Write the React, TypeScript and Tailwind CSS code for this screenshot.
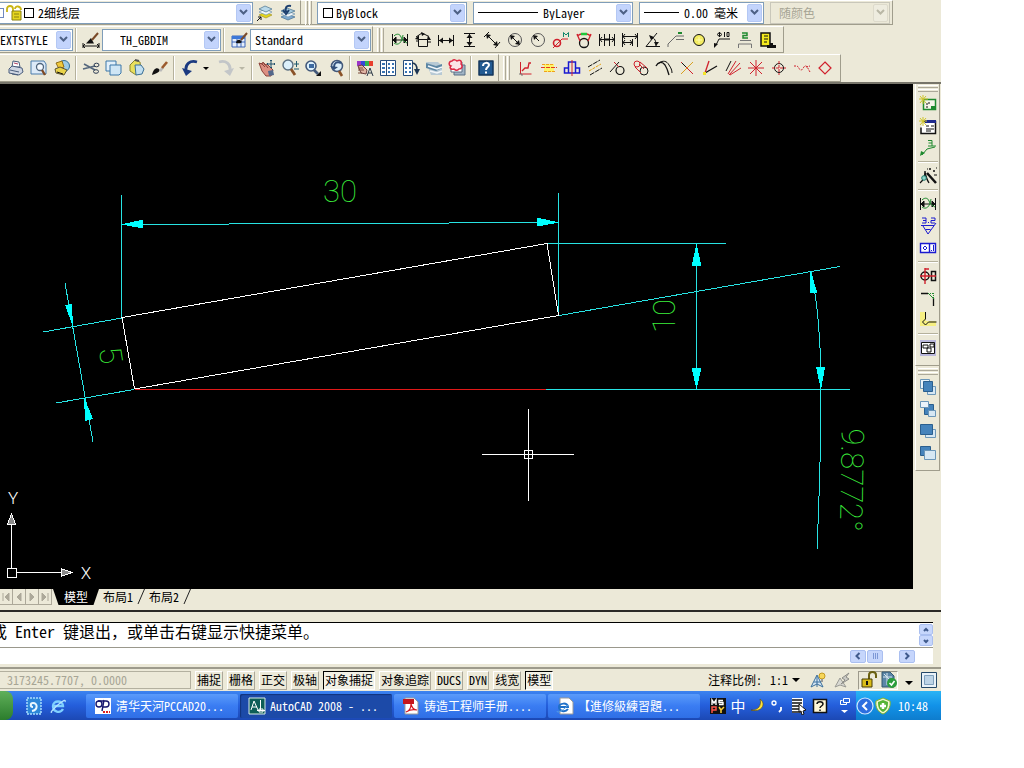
import React from 'react';

type Art = React.ReactNode;

const K = '#111111';
const R = '#d0202c';
const G = '#1f8a2f';
const B = '#1a1ad0';

const art: Record<string, Art> = {
  layerStates: (
    <>
      <path d="M3 11l6-3 7 3-6 3z" fill="#e3d51c" stroke="#9a8c1c" strokeWidth=".6" />
      <path d="M3 8l6-3 7 3-6 3z" fill="#eef6fb" stroke="#6f93ad" strokeWidth=".7" />
      <path d="M3 5l6-3 7 3-6 3z" fill="#b9d9ea" stroke="#47708c" strokeWidth=".7" />
      <path d="M1 17l4-4M2 13h3v3" stroke={K} />
    </>
  ),
  layerPrev: (
    <>
      <path d="M2 13l6-3 8 3-7 3z" fill="#7eaad0" stroke="#456e92" strokeWidth=".7" />
      <path d="M2 10l6-3 8 3-7 3z" fill="#f2f7fb" stroke="#6f93ad" strokeWidth=".7" />
      <path d="M2 7l6-3 8 3-7 3z" fill="#a5cbe0" stroke="#47708c" strokeWidth=".7" />
      <path d="M12 2C7 1 6 4 7 8M4 6l3 4 3-4" stroke="#1d3f6e" strokeWidth="2" />
    </>
  ),
  dimStyle: (
    <>
      <path d="M1 15h16M1 12v5M17 12v5M3 13l-2 2 2 2M15 13l2 2-2 2" stroke={K} />
      <path d="M4 12.500h8L9 7z" fill={K} />
      <path d="M10 9l6-7" stroke="#7a4a28" strokeWidth="2" />
    </>
  ),
  tableStyle: (
    <>
      <path d="M2 5h13v11H2z" fill="#e4eefc" stroke="#3d67b8" />
      <path d="M2 5h13v3H2z" fill="#3d78d8" />
      <path d="M2 11h13M7 8v8M11 8v8" stroke="#3d67b8" />
      <path d="M6 12c0-3 3-4 4-3l2 2c-2 2-4 1-6 1z" fill={K} />
      <path d="M11 9l6-7" stroke="#7a4a28" strokeWidth="2" />
    </>
  ),
  print: (
    <>
      <path d="M5 8l1-6 6 1 1 5z" fill="#fff" stroke="#4a5d7c" />
      <path d="M2 10l3-3 10 2 1 4-4 3-10-2z" fill="#cfd6e2" stroke="#4a5d7c" />
      <path d="M3 11l9 2M5 15l6 1" stroke="#4a5d7c" />
      <path d="M7 4l4 1" stroke="#b04060" />
    </>
  ),
  preview: (
    <>
      <path d="M1 2h13l2 3v10H1z" fill="#dceaf8" stroke="#4b7cab" />
      <circle cx="10" cy="8" r="3.5" fill="#f5faff" stroke="#50667d" strokeWidth="1.3" />
      <path d="M12 11l3 5" stroke="#7d4a25" strokeWidth="2.4" />
    </>
  ),
  publish: (
    <>
      <circle cx="11" cy="7" r="5.5" fill="#9ccbe6" stroke="#2f6d98" />
      <path d="M3 4l6-2 2 6-5 2z" fill="#f0c83a" stroke="#906f18" />
      <path d="M2 10l5-2 7 3-3 5-8-2z" fill="#e9d34a" stroke="#5b5230" />
      <path d="M4 13l6 2" stroke={K} />
    </>
  ),
  cut: (
    <>
      <path d="M2 5l11 6M1 10l12-3" stroke="#55677c" strokeWidth="1.6" />
      <ellipse cx="14" cy="12.5" rx="2.5" ry="1.8" stroke="#2c3b52" />
      <ellipse cx="14.500" cy="6" rx="2.5" ry="1.800" stroke="#2c3b52" />
    </>
  ),
  copy: (
    <>
      <path d="M1 2h10v10H1z" fill="#e2f0fa" stroke="#3a77a8" />
      <path d="M5 6h11v8l-2 2H5z" fill="#cfe6f5" stroke="#3a77a8" />
    </>
  ),
  paste: (
    <>
      <path d="M2 6l5-5 5 2 1 9-5 4-6-4z" fill="#e9df5c" stroke="#8a8430" />
      <path d="M7 1l4 1" stroke="#555" strokeWidth="2" />
      <path d="M7 6h6l3 4-2 5-6 1z" fill="#c2dff0" stroke="#3a6f96" />
    </>
  ),
  match: (
    <>
      <path d="M1 16c1-5 4-8 7-6 2 2-1 4-7 6z" fill={K} />
      <path d="M8 11l3-3 2 1-3 4z" fill="#b8b8b8" />
      <path d="M11 9l5-6" stroke="#9b5b2e" strokeWidth="2.6" />
    </>
  ),
  undo: (
    <>
      <path d="M16 3C9 1 4 5 5 12" stroke="#1b3a80" strokeWidth="2.8" />
      <path d="M1 9l4 8 6-5z" fill="#1b3a80" />
    </>
  ),
  redo: (
    <>
      <path d="M2 3c7-2 12 2 11 9" stroke="#c3c6c8" strokeWidth="2.8" />
      <path d="M17 9l-4 8-6-5z" fill="#c3c6c8" />
    </>
  ),
  pan: (
    <>
      <path d="M1 4l3 1 1-2 2 3 2-1 6 6-2 6H8L4 12z" fill="#dc8f82" stroke="#8a4038" />
      <path d="M3 4l4 4M6 4l4 5" stroke="#8a4038" />
      <path d="M10 12l5-1 1 5-5 1z" fill="#53688b" />
      <path d="M13 1v8M9 5h8M12 2l1-1 1 1M12 8l1 1 1-1M10 4l-1 1 1 1M16 4l1 1-1 1" stroke="#21506d" />
    </>
  ),
  zoomRt: (
    <>
      <circle cx="7" cy="6" r="5" fill="#dcf0fb" stroke="#5b6f80" strokeWidth="1.4" />
      <path d="M10 10l4 6" stroke="#8a5228" strokeWidth="2.8" />
      <path d="M13 5h5M15.500 2v6M13 10h5" stroke="#215a6f" />
    </>
  ),
  zoomWin: (
    <>
      <circle cx="7" cy="7" r="5" fill="#dcf0fb" stroke="#43597a" strokeWidth="1.6" />
      <path d="M5 5h5v4H5z" fill="#3d6aa0" />
      <path d="M10 11l4 4" stroke="#43597a" strokeWidth="2.6" />
      <path d="M17 12v5h-5z" fill={K} />
    </>
  ),
  zoomPrev: (
    <>
      <circle cx="10" cy="7" r="5.500" fill="#dcf0fb" stroke="#43597a" strokeWidth="1.5" />
      <path d="M14 4c-4-2-7 0-7 4" stroke="#30507c" strokeWidth="2" />
      <path d="M3 7l4 4 4-3z" fill="#30507c" />
      <path d="M12 12l3 5" stroke="#8a5228" strokeWidth="2.6" />
    </>
  ),
  props: (
    <>
      <path d="M1 2h4v5H1z" fill="#9b35c8" />
      <path d="M5 2h4v5H5z" fill="#3548d8" />
      <path d="M9 2h4v5H9z" fill="#30b34e" />
      <path d="M13 2h4v5h-4z" fill="#e8402e" />
      <path d="M2 7l4-1 5 5-1 4-5-1z" fill="#e0b5a4" stroke="#6b3c3c" />
      <path d="M2 9h5M2 11h6M2 14h4" stroke="#7a4a3a" />
      <path d="M11 17l3-8 3 8M12 14h4" stroke="#2d3a48" />
    </>
  ),
  designCenter: (
    <>
      <path d="M1.500 1.500h15v15h-15z" fill="#fff" stroke="#284d7c" />
      <path d="M7.500 2v14" stroke="#284d7c" />
      <path d="M3 4h3v2H3zM3 8h3v2H3zM3 12h3v2H3zM9 4h2v2H9zM13 4h2v2h-2zM9 8h2v2H9zM13 8h2v2h-2zM9 12h2v2H9zM13 12h2v2h-2z" fill="#3974b4" />
    </>
  ),
  toolPalette: (
    <>
      <path d="M1.500 1.500h9v15h-9z" fill="#fff" stroke="#284d7c" />
      <path d="M3 4h2v2H3zM7 4h2v2H7zM3 8h2v2H3zM7 8h2v2H7zM3 12h2v2H3zM7 12h2v2H7z" fill="#3974b4" />
      <path d="M10 4c4 0 5 3 5 7" stroke="#1d3552" strokeWidth="1.600" />
      <path d="M12 10l3 6 3-6z" fill="#1d3552" />
    </>
  ),
  sheetSet: (
    <>
      <path d="M1 3h12l4 4v9H6z" fill="#b7c9d4" />
      <path d="M1 4l10 3 6-2v4l-6 3-10-3z" fill="#5d87a4" />
      <path d="M3 7l9 3 5-2M5 12l7 2 5-2" stroke="#f3f7fa" strokeWidth="1.5" />
    </>
  ),
  markup: (
    <>
      <path d="M6 6h11v10H6z" fill="#9fb3c4" stroke="#5a7186" />
      <path d="M3 3h11v10H3z" fill="#fff" stroke="#5a7186" />
      <path d="M4 2c2-2 4-1 5 0 3-2 5 0 4 3 2 2 1 5-2 5-2 2-4 1-5 0-3 1-5-1-3-3-3-1-2-5 1-5z" fill="#fbe3e6" stroke="#dd2744" strokeWidth="1.5" />
    </>
  ),
  help: (
    <>
      <path d="M2 2h14v14H2z" fill="#235b92" stroke="#14365a" strokeWidth="1.5" strokeLinejoin="round" />
      <path d="M6 7c0-4 6-4 6-1 0 2-3 2-3 5M9 12.500v2" stroke="#fff" strokeWidth="2" />
    </>
  ),
  dPower: (
    <>
      <path d="M1.500 3v12M16.500 3v12M2 9h14M2 9l3-3v6zM16 9l-3-3v6z" fill={K} stroke={K} />
      <path d="M3 5c3-3 6-2 7 1s4 5 6 6M3 12c4 3 8 0 9-8" stroke={G} />
    </>
  ),
  dMulti: (
    <>
      <path d="M4.500 8.500h9v7h-9zM2 6l6-4 6 3M2 10h2M14 11h3" stroke={K} />
      <path d="M1 8l4-4v5zM7 1l4 2-3 2zM14 4l3 5h-4z" fill={K} />
    </>
  ),
  dLinear: (
    <>
      <path d="M1.500 4v11M16.500 4v11M2 9.500h14" stroke={K} />
      <path d="M2 9.500l4-3v6zM16 9.500l-4-3v6z" fill={K} />
    </>
  ),
  dVert: (
    <>
      <path d="M4 2.500h11M4 15.500h11M9.500 3v12" stroke={K} />
      <path d="M9.500 3l3 4h-6zM9.500 15l3-4h-6z" fill={K} />
    </>
  ),
  dAligned: (
    <>
      <path d="M6 1L1 6M17 11l-5 6M4 4l10 10" stroke={K} />
      <path d="M3 3l5 1-4 4zM15 15l-5-1 4-4z" fill={K} />
    </>
  ),
  dDia: (
    <>
      <circle cx="9" cy="9" r="6.500" stroke="#555" />
      <path d="M5 5l8 8" stroke={K} />
      <path d="M4 4l5 1-4 4zM14 14l-5-1 4-4z" fill={K} />
    </>
  ),
  dRad: (
    <>
      <circle cx="9" cy="9" r="6.500" stroke="#555" />
      <path d="M5 5l5 5" stroke={K} />
      <path d="M4 4l5 1-4 4z" fill={K} />
    </>
  ),
  dTolM: (
    <>
      <circle cx="5" cy="12" r="3.500" stroke={R} strokeWidth="1.600" />
      <path d="M1 17L10 8h6" stroke={R} />
      <path d="M11.500 6V1.500l2.500 2.500 2.500-2.500V6" stroke="#12876c" />
    </>
  ),
  dArcLen: (
    <>
      <circle cx="9" cy="12" r="4.500" stroke={K} strokeWidth="1.300" />
      <path d="M2 3l3 7M16 3l-3 7M2 5c4-3 10-3 14 0" stroke={R} strokeWidth="1.300" />
      <path d="M6 3h6" stroke="#1fc63b" strokeWidth="2.500" />
    </>
  ),
  dCont: <path d="M1.500 3v12M6.500 3v12M11.500 3v12M16.500 3v12M2 8.500h14M4 6L2 8.500 4 11M14 6l2 2.500-2 2.500M8 7v3M10 7v3" stroke={K} />,
  dBase: <path d="M1.500 2v14M16.500 2v14M11.500 8v7M2 5.500h14M2 11.500h9M4 3L2 5.500 4 8M14 3l2 2.500L14 8M4 9l-2 2.500L4 14M9 9l2 2.500L9 14" stroke={K} />,
  dAng: (
    <>
      <path d="M13 2L2 15.500h14M7 6c4 1 5 4 5 9" stroke={K} />
      <path d="M5 4l5 2-3 3zM10 11h5l-3 4z" fill={K} />
    </>
  ),
  dLeader: (
    <>
      <path d="M1 16v-3l8-8h8M9 8.500h8" stroke="#6b6b6b" />
      <path d="M11 1h4v2h-4z" fill={G} />
    </>
  ),
  dCenter: (
    <>
      <circle cx="9" cy="9" r="5.500" fill="#f3ec62" stroke={K} />
      <path d="M9 6v6M6 9h6" stroke="#fffbb0" />
    </>
  ),
  dHole: (
    <>
      <path d="M3 14l3-6h11" stroke={K} />
      <path d="M1 12l4 1-4 4z" fill={K} />
      <ellipse cx="6.500" cy="3.500" rx="2" ry="1.500" stroke={K} />
      <path d="M6.500 1v5M11.500 1v5M14 1.500h2v4h-2z" stroke={K} />
    </>
  ),
  dNumber: (
    <>
      <path d="M6 2h5v2.500H7V7h5" stroke={G} strokeWidth="1.500" />
      <path d="M4 9.500h11M2.500 17v-4h13v4" stroke="#777" />
    </>
  ),
  dTable: (
    <>
      <path d="M2 2h9v13H2z" fill="#f4ea1e" stroke={K} strokeWidth="1.500" />
      <path d="M5 5h4M5 8h4M5 11h3" stroke={K} />
      <path d="M8 17v-3h3v-2h3v2h3v3z" fill={K} />
    </>
  ),
  cAxes: (
    <>
      <path d="M3.500 3v12h11" stroke={R} />
      <path d="M5 12l3-3h3l1-5h2" stroke={R} strokeWidth="1.300" />
      <path d="M2 15h3v2" stroke="#777" />
    </>
  ),
  cYellow: (
    <>
      <path d="M4 5h10v8H4z" fill="#fdf46a" />
      <path d="M1 8.500h16" stroke="#e23a20" strokeDasharray="4 1" />
      <path d="M2 5.500h12M4 12.500h11" stroke="#f0a01a" strokeDasharray="3 1" />
    </>
  ),
  cBlue: (
    <>
      <path d="M5.500 9V3h7v6h4v5h-15V9h4v5M12.500 9v5" stroke={B} strokeWidth="1.500" />
      <path d="M9 1v16" stroke={R} />
    </>
  ),
  cMid: (
    <>
      <path d="M2 8L14 1M4 16l12-7" stroke={K} strokeDasharray="5 1" />
      <path d="M3 12L15 5" stroke="#e6a212" strokeDasharray="3 1" />
    </>
  ),
  cTan: (
    <>
      <circle cx="11" cy="11.500" r="4" stroke={K} strokeWidth="1.200" />
      <path d="M5 3l5 5" stroke={R} />
      <path d="M1 13L10 3" stroke={K} />
    </>
  ),
  cBelt: (
    <>
      <circle cx="5" cy="5" r="3" stroke={R} />
      <circle cx="12" cy="12" r="4" stroke={K} />
      <path d="M3 8l6 6M8 3l7 6M7 5l5 5" stroke={R} />
    </>
  ),
  cArcOff: (
    <>
      <path d="M1 7c2-4 6-5 9-1 2 3 3 6 4 10" stroke={K} strokeWidth="1.300" />
      <path d="M4 4c4-3 8-2 10 2 2 3 3 5 3 8" stroke={K} />
    </>
  ),
  cCross: (
    <>
      <path d="M3 3l12 12" stroke={R} />
      <path d="M15 3L3 15" stroke="#d8a020" />
      <path d="M4 4l4 4" stroke={K} />
    </>
  ),
  cAngle: (
    <>
      <path d="M8 2L4 14" stroke={R} strokeWidth="1.300" />
      <path d="M4 14l12-7" stroke={K} strokeWidth="1.300" />
      <path d="M2 13h3v3H2z" fill="#f3e52c" />
    </>
  ),
  cFan: (
    <>
      <path d="M7 2L2 12" stroke={K} />
      <path d="M12 2L4 15M16 4L5 16M17 9L6 16" stroke={R} />
    </>
  ),
  cStar: <path d="M9 1v16M1 9h16M3 3l12 12M15 3L3 15" stroke={R} />,
  cTarget: (
    <>
      <circle cx="9" cy="9" r="4.500" stroke={K} />
      <path d="M9 2v14M2 9h14" stroke={R} strokeDasharray="3 1" />
    </>
  ),
  cWave: (
    <path d="M1 7h3c2 1 2 4 4 4s2-3 4-4 3 3 5 6M13 8l4-1" stroke={R} strokeDasharray="2 1" />
  ),
  cDiamond: <path d="M9 3l6 6-6 6-6-6z" stroke={R} strokeWidth="1.200" />,
  sFrame: (
    <>
      <path d="M4.500 4.500h12v10h-12z" fill="#f6f4e8" stroke={G} strokeWidth="1.500" />
      <path d="M4 0v9M0 4h9M1 1l6 7M7 1L1 8" stroke="#cfc52a" />
      <path d="M8 13V8h4" stroke={K} strokeDasharray="2 1" />
      <path d="M12 11h5v4h-5z" fill={G} />
    </>
  ),
  sSheet: (
    <>
      <path d="M4.500 4.500h12v12H2v-6" fill="#fff" stroke={K} strokeWidth="1.500" />
      <path d="M6 3h11v3H6z" fill="#1e2a8e" />
      <path d="M7 9h3M12 9h3M7 12h8M7 14h5" stroke={K} />
      <path d="M4 0v9M0 4h8M1 1l6 7M7 1L1 8" stroke="#cfc52a" />
    </>
  ),
  sLeader: (
    <>
      <path d="M9 1.500h4V7M13 4H9.500M9 7h8" stroke={G} />
      <path d="M3 16l5-6 8-2" stroke={G} />
      <path d="M1 17l1-5 4 2z" fill={G} />
    </>
  ),
  sWand: (
    <>
      <path d="M8 6l9 10" stroke={K} strokeWidth="2.500" />
      <path d="M6 4c0 5-1 9-5 12M6 5c1 5 2 8 4 11" stroke={K} strokeWidth="1.300" />
      <circle cx="5" cy="11" r="2.300" fill="#8fd6ca" stroke="#1f7a6c" />
      <path d="M10 2h2M11 1v2M14 4h2M15 3v2M15 8h3M8 2h1M17 1h1" stroke={K} />
    </>
  ),
  sRough: (
    <>
      <path d="M3 1h4v5H3M4 3.500h3M9 5.500h1M12 1h4v2.500h-4V6h4" stroke={B} />
      <path d="M2 8.500h13M4 9l5 8 8-11M6.500 12.500h5" stroke={B} />
    </>
  ),
  sGdt: (
    <>
      <path d="M1.500 4.500h15v9h-15zM10.500 5v8" fill="#fff" stroke={B} strokeWidth="1.400" />
      <path d="M6 7l2 2-2 2-2-2zM12 11.500h1M14.500 6v6" stroke={B} />
    </>
  ),
  sShaft: (
    <>
      <circle cx="6" cy="9" r="4" stroke={K} strokeWidth="1.500" />
      <path d="M12.500 4.500h4v9h-4z" stroke={K} strokeWidth="1.500" />
      <path d="M6 1v16M1 9h16M6 2h4" stroke={R} strokeWidth="1.400" />
    </>
  ),
  sChamfer: (
    <>
      <path d="M2 4.500h7M14.500 9v8" stroke={K} strokeWidth="1.300" />
      <path d="M9 4l6 6" stroke={G} />
      <path d="M9 4.500h6M14.500 4v6" stroke={G} strokeDasharray="1 1" />
    </>
  ),
  sCorner: (
    <>
      <path d="M1 1h6v9h10v5H1z" fill="#f6ef82" />
      <path d="M6.500 1v7l-3 3 3 3 3-3h8" stroke={K} />
    </>
  ),
  sDetail: (
    <>
      <path d="M1 1h16v16H1z" fill="#b9b7dc" />
      <path d="M2.500 3.500h13v11h-13z" fill="#fff" stroke={K} />
      <path d="M4 6h5v3H4zM8 9h4v4H8zM11 5h4v3h-4z" stroke={K} />
    </>
  ),
  oFront: (
    <>
      <path d="M1.500 1.500h9v9h-9z" fill="#eaf3fa" stroke="#6b96b8" />
      <path d="M8.500 8.500h8v8h-8z" fill="#d6e7f3" stroke="#6b96b8" />
      <path d="M4.500 3.500h9v10h-9z" fill="#4583bb" stroke="#2b5f8e" />
    </>
  ),
  oBack: (
    <>
      <path d="M5.500 4.500h9v10h-9z" fill="#4583bb" stroke="#2b5f8e" />
      <path d="M1.500 1.500h8v6h-8z" fill="#eaf3fa" stroke="#6b96b8" />
      <path d="M9.500 10.500h7v6h-7z" fill="#d6e7f3" stroke="#6b96b8" />
    </>
  ),
  oAbove: (
    <>
      <path d="M6.500 7.500h10v8h-10z" fill="#d6e7f3" stroke="#6b96b8" />
      <path d="M1.500 2.500h12v10h-12z" fill="#4583bb" stroke="#2b5f8e" />
    </>
  ),
  oUnder: (
    <>
      <path d="M1.500 2.500h10v9h-10z" fill="#4583bb" stroke="#2b5f8e" />
      <path d="M5.500 6.500h11v9h-11z" fill="#d6e7f3" stroke="#6b96b8" />
    </>
  ),
  annoVis: (
    <>
      <path d="M8 4L2 16l6-3 6 3z" fill="#d5e6f4" stroke="#3a6f9c" />
      <path d="M8 5v11M5 11h7" stroke="#3a6f9c" />
      <circle cx="13" cy="5" r="3" fill="#f6d65a" stroke="#c49a20" />
      <path d="M12 8h2v3h-2z" fill="#999" />
    </>
  ),
  annoAuto: (
    <>
      <path d="M7 7L2 16l5-2 6 2z" fill="#d9d9d3" stroke="#9a9a94" />
      <path d="M16 2l-7 5 3 2-4 4 8-5-3-2z" fill="#c9c9c4" stroke="#8d8d88" />
    </>
  ),
  lock: (
    <>
      <path d="M9 8V4c0-4 7-4 7 0v3" stroke="#6a6010" strokeWidth="2" />
      <path d="M2 8h10v8H2z" fill="#d9bc17" stroke="#463d08" />
      <path d="M7 10v4" stroke={K} strokeWidth="2" />
    </>
  ),
  docOk: (
    <>
      <path d="M2 1h8l4 4v11H2z" fill="#5b86a8" stroke="#33566f" />
      <path d="M3 6h9M7 2v12M4 3l7 7" stroke="#d7e6f0" />
      <circle cx="12" cy="12" r="5" fill="#2b9d3c" />
      <path d="M9.500 12l2 2 3-4" stroke="#fff" strokeWidth="1.600" />
    </>
  ),
  clean: (
    <>
      <path d="M1.500 1.500h15v15h-15z" fill="#e8f1f8" stroke="#234768" />
      <path d="M4.500 4.500h9v9h-9z" fill="#bcd3e6" stroke="#7fa0bd" />
    </>
  ),
  messenger: (
    <>
      <path d="M2 1h14v16H2z" fill="#2d87d8" stroke="#a9dcff" strokeDasharray="2 1" strokeWidth="1.500" />
      <path d="M7 14c6-1 6-8 1-8-3 0-3 4 0 4" stroke="#e9f7ff" strokeWidth="2" />
    </>
  ),
  ie: (
    <>
      <path d="M14 12c-3 5-10 3-10-3s10-6 10 0H5" stroke="#7fd0ff" strokeWidth="2.400" />
      <path d="M3 15C0 17 5 11 10 7s7-5 6-2" stroke="#b7e4ff" strokeWidth="1.200" />
    </>
  ),
  pccad: (
    <>
      <path d="M1 1h16v16H1z" fill="#fff" />
      <ellipse cx="5" cy="7" rx="3" ry="3" stroke="#16166e" strokeWidth="1.400" />
      <path d="M4 4h8c4 0 4 6 0 6H8M10 3L8 14" stroke="#16166e" strokeWidth="1.400" />
      <path d="M9 15h2M12 15h2M15 15h1" stroke="#e02020" strokeWidth="2" />
    </>
  ),
  acad: (
    <>
      <path d="M1 1h16v16H1z" fill="#0e5e57" stroke="#d9ece8" />
      <path d="M3 13l3-9 4 9M4 10h5M12.500 3v10M9 13.500h8M11 12h4v3h-4z" stroke="#fff" />
    </>
  ),
  pdf: (
    <>
      <path d="M3 1h9l4 4v12H3z" fill="#fff" stroke="#9a9a9a" />
      <path d="M1 2h11v5H1z" fill="#c5161d" />
      <path d="M9 7c0 4-2 7-5 8M9 7c1 4 3 6 6 6-4-1-8 0-11 2" stroke="#d6141c" strokeWidth="1.200" />
    </>
  ),
  iedoc: (
    <>
      <path d="M4 1h9l4 4v12H4z" fill="#fff" stroke="#9a9a9a" />
      <path d="M12 12c-3 4-9 2-9-2s9-5 9 0H4" stroke="#1e6fc8" strokeWidth="2" />
      <path d="M1 14c0 3 7-1 11-6" stroke="#57a2e6" />
    </>
  ),
  mspy: (
    <>
      <path d="M1 1h16v16H1z" fill="#111" />
      <path d="M3 8V3l2 3 2-3v5M14 3.500h-4v2h4v2h-4" stroke="#fff" strokeWidth="1.400" />
      <path d="M3 16v-6h4v3H3" stroke="#ff5348" strokeWidth="1.500" />
      <path d="M10 10l2 3 3-3M12 13v3" stroke="#ffd23c" strokeWidth="1.500" />
    </>
  ),
  moon: <path d="M11 2c7 5 1 14-9 11C9 14 13 8 11 2z" fill="#ffe23a" stroke="#5c4a08" strokeWidth=".6" />,
  punct: (
    <>
      <circle cx="5" cy="6" r="2" stroke="#fff" strokeWidth="1.300" />
      <path d="M12 10v3l-2 2" stroke="#fff" strokeWidth="1.800" />
    </>
  ),
  softkey: (
    <>
      <path d="M3 1h11v15H3z" fill="#fff" />
      <path d="M3 3h10M3 6h10M3 9h7M3 12h7M3 15h10" stroke={K} strokeWidth="1.400" />
      <path d="M10 7l7 6-3 1 1 3-2 1-1-4-2 1z" fill="#fff" stroke={K} />
    </>
  ),
  imeHelp: (
    <>
      <path d="M2.500 2.500h13v13h-13z" fill="#fff8d8" stroke={K} strokeWidth="1.500" />
      <path d="M6 7c0-3 6-3 6 0 0 2-3 2-3 4M9 12.500V14" stroke={K} strokeWidth="1.500" />
    </>
  ),
  restore: (
    <>
      <path d="M8.500 1.500h6v4h-6zM7.500 3.500h-2v4h6V6" stroke="#fff" />
      <path d="M6 13h7l-3.500 3z" fill="#fff" />
    </>
  ),
  collapse: (
    <>
      <circle cx="9" cy="9" r="8" fill="#2d6fe0" stroke="#cfe6ff" strokeWidth="1.200" />
      <path d="M11 5L7 9l4 4" stroke="#fff" strokeWidth="2" />
    </>
  ),
  shield: (
    <>
      <path d="M9 1l7 3c1 6-2 11-7 13C4 15 1 10 2 4z" fill="#f2f6d0" stroke="#7fb52e" />
      <path d="M9 3l5 2c0 5-1 8-5 10-4-2-5-5-5-10z" fill="#55b435" />
      <path d="M9 6v6M6 9h6" stroke="#fff" strokeWidth="2.500" />
    </>
  ),
  lockOpen: (
    <>
      <path d="M1 8V5c0-4 6-4 6 0v3M9 5c0-4 6-3 6 1" stroke="#c9b514" strokeWidth="1.800" />
      <path d="M6 7h9v9H6z" fill="#e6d61e" stroke="#8a8010" />
      <path d="M8 10h5M8 13h5" stroke="#8a8010" />
    </>
  ),
};

function Glyph({ name }: { name: string }) {
  return (
    <svg viewBox="0 0 18 18" fill="none" className="size-[18px] shrink-0" aria-hidden="true">
      {art[name]}
    </svg>
  );
}

function Tool({ name, cls = 'w-[23px] h-6' }: { name: string; cls?: string }) {
  return (
    <button type="button" aria-label={name} className={`flex shrink-0 items-center justify-center ${cls}`}>
      <Glyph name={name} />
    </button>
  );
}

function Caret({ tone = 'border-t-black' }: { tone?: string }) {
  return <span className={`h-0 w-0 border-x-[3px] border-t-[3px] border-x-transparent ${tone}`} />;
}

function Sep() {
  return <span className="mx-0.5 h-6 w-0.5 shrink-0 border-r border-l border-[#b5b19c] border-r-white" />;
}

function Grip() {
  return (
    <span className="mr-1 flex h-6 shrink-0 gap-px pl-1">
      <span className="w-[3px] border-r border-l border-l-white border-r-[#aca899]" />
      <span className="w-[3px] border-r border-l border-l-white border-r-[#aca899]" />
    </span>
  );
}

function Bar({ children, cls = '' }: { children: React.ReactNode; cls?: string }) {
  return (
    <div className={`flex shrink-0 items-center border-t border-r border-b border-t-white border-r-[#a09d8c] border-b-[#a09d8c] ${cls}`}>
      {children}
    </div>
  );
}

interface ComboProps {
  label: string;
  options: string[];
  cls: string;
  lead?: React.ReactNode;
  indent?: string;
  disabled?: boolean;
}

function Combo({ label, options, cls, lead, indent = 'pl-1', disabled = false }: ComboProps) {
  return (
    <div className={`flex h-[22px] shrink-0 items-center border ${disabled ? 'border-[#c9c7ba] bg-[#ece9d8] text-[#a7a595]' : 'border-[#7f9db9] bg-white'} ${cls}`}>
      {lead}
      <select aria-label={label} disabled={disabled} className={`h-full min-w-0 flex-1 appearance-none bg-transparent outline-none ${indent}`}>
        {options.map((o) => (
          <option key={o}>{o}</option>
        ))}
      </select>
      <span className={`mr-px flex h-[18px] w-[15px] items-center justify-center rounded-xs border ${disabled ? 'border-[#dddacb] bg-[#eeecdf] text-[#b9b7a6]' : 'border-[#b4c8f4] bg-[#c3d4fc] text-[#4d6185]'}`}>
        <svg viewBox="0 0 9 7" className="h-[7px] w-[9px]" fill="none" stroke="currentColor" strokeWidth="2">
          <path d="M1 1l3.500 3.500L8 1" />
        </svg>
      </span>
    </div>
  );
}

const dimTools = ['dPower', 'dMulti', 'dLinear', 'dVert', 'dAligned', 'dDia', 'dRad', 'dTolM', 'dArcLen', 'dCont', 'dBase', 'dAng', 'dLeader', 'dCenter', 'dHole', 'dNumber', 'dTable'];
const conTools = ['cAxes', 'cYellow', 'cBlue', 'cMid', 'cTan', 'cBelt', 'cArcOff', 'cCross', 'cAngle', 'cFan', 'cStar', 'cTarget', 'cWave', 'cDiamond'];
const sideGroups = [['sFrame', 'sSheet', 'sLeader'], ['sWand'], ['dPower', 'sRough', 'sGdt'], ['sShaft', 'sChamfer', 'sCorner'], ['sDetail']];
const orderTools = ['oFront', 'oBack', 'oAbove', 'oUnder'];

function Toolbars() {
  return (
    <header className="flex flex-col overflow-hidden border-b-2 border-[#77756a]">
      <div className="flex h-[26px] pb-px">
        <Bar cls="pr-px">
          <Combo
            label="图层"
            cls="w-[253px] border-l-0"
            indent="pl-1"
            options={['2细线层']}
            lead={
              <>
                <span className="h-2.5 w-1 border border-l-0 border-[#7089c0]" />
                <span className="ml-0.5 flex"><Glyph name="lockOpen" /></span>
                <span className="size-2.5 border border-black" />
              </>
            }
          />
          <Tool name="layerStates" />
          <Tool name="layerPrev" />
        </Bar>
        <Bar cls="pr-0.5">
          <Grip />
          <Combo label="颜色" cls="ml-px w-[150px]" indent="pl-[3px]" options={['ByBlock']} lead={<span className="ml-[5px] size-2.5 border border-black" />} />
          <Combo label="线型" cls="ml-1.5 w-40" indent="pl-[5px]" options={['ByLayer']} lead={<span className="ml-1 h-px w-[60px] bg-black" />} />
          <Combo label="线宽" cls="ml-1.5 w-[125px]" indent="pl-[5px]" options={['0.00 毫米']} lead={<span className="ml-1 h-px w-[35px] bg-black" />} />
          <Combo label="打印样式" cls="ml-1.5 w-[120px]" indent="pl-2" options={['随颜色']} disabled />
        </Bar>
      </div>
      <div className="flex h-7 pb-px">
        <Bar cls="pr-px">
          <Combo label="文字样式" cls="w-[73px] border-l-0" indent="pl-0" options={['EXTSTYLE']} />
          <Sep />
          <Tool name="dimStyle" />
          <Combo label="标注样式" cls="w-[119px]" indent="pl-[17px]" options={['TH_GBDIM']} />
          <Sep />
          <Tool name="tableStyle" />
          <Combo label="表格样式" cls="w-[121px]" options={['Standard']} />
        </Bar>
        <Bar cls="pr-1">
          <Grip />
          {dimTools.map((n) => <Tool key={n} name={n} />)}
        </Bar>
      </div>
      <div className="flex h-7">
        <Bar cls="pr-px pl-1">
          {['print', 'preview', 'publish'].map((n) => <Tool key={n} name={n} />)}
          <Sep />
          {['cut', 'copy', 'paste', 'match'].map((n) => <Tool key={n} name={n} />)}
          <Sep />
          <button type="button" aria-label="放弃" className="flex h-6 w-9 items-center justify-center gap-1"><Glyph name="undo" /><Caret /></button>
          <button type="button" aria-label="重做" className="flex h-6 w-9 items-center justify-center gap-1"><Glyph name="redo" /><Caret tone="border-t-[#b9b7a6]" /></button>
          <Sep />
          {['pan', 'zoomRt', 'zoomWin', 'zoomPrev'].map((n) => <Tool key={n} name={n} />)}
          <Sep />
          {['props', 'designCenter', 'toolPalette', 'sheetSet', 'markup'].map((n) => <Tool key={n} name={n} />)}
          <Sep />
          <Tool name="help" />
        </Bar>
        <Bar cls="pr-1">
          <Grip />
          {conTools.map((n) => <Tool key={n} name={n} />)}
        </Bar>
      </div>
    </header>
  );
}

function Drawing() {
  return (
    <svg viewBox="0 0 913 505" preserveAspectRatio="xMinYMin meet" className="block size-full" fill="none">
      <path d="M135 305.500H546" stroke="#e01818" shapeRendering="crispEdges" />
      <g stroke="#27e3e3" shapeRendering="crispEdges">
        <path d="M121.500 111V234M558.500 109V232M122 140.500L558 138.500" />
        <path d="M547 159.500H726M546 305.500H850M696.500 160V305" />
        <path d="M559 231.500L840 182.500M122 234L43 248M134 305.500L56 319" />
        <path d="M65 199L93 358M811 187Q821 235 821 305T817 465" />
      </g>
      <g fill="#00ffff" shapeRendering="crispEdges">
        <path d="M121 140.500l22-5v9zM559 138.500l-22-5v9z" />
        <path d="M696.500 160l-5 22h10zM696.500 305.500l-5-22h10z" />
        <path d="M810.500 187l-1 22 8 0zM821 306l-5-23h9z" />
        <path d="M73 243l-8-22 7-1zM84 313l1 24 8-2z" />
      </g>
      <g stroke="#ffffff" shapeRendering="crispEdges">
        <path d="M122 233.500L547 159.500L558.500 231.500L134.500 305Z" />
        <path d="M528.500 325V417M482 370.500H574" />
        <path d="M524.500 366.500h8v8h-8z" />
      </g>
      <g fill="#3cf03c" className="font-['Roboto',sans-serif] text-[31px] font-thin" textAnchor="middle">
        <text x="340" y="118">30</text>
        <text transform="translate(675 232) rotate(-90)">10</text>
        <text transform="translate(100 273) rotate(81)">5</text>
        <text transform="translate(841 396) rotate(91)">9.8772°</text>
      </g>
      <g stroke="#ffffff" shapeRendering="crispEdges">
        <path d="M7.500 484.500h9v9h-9zM11.500 484V432M17 488.500H73" />
        <path d="M11.500 430l-4 10h8zM72 488.500l-11-4v8z" fill="#8a8a8a" />
      </g>
      <g fill="#ffffff" className="font-['Roboto',sans-serif] text-[17px] font-light" textAnchor="middle">
        <text x="13" y="420">Y</text>
        <text x="86" y="495">X</text>
      </g>
    </svg>
  );
}

function SideBar() {
  const box = 'flex flex-col items-center border-r border-b border-l border-l-white border-r-[#a09d8c] border-b-[#a09d8c]';
  const grip = (
    <span className="my-px flex w-5 flex-col gap-px">
      <span className="h-[3px] border-y border-t-white border-b-[#aca899]" />
      <span className="h-[3px] border-y border-t-white border-b-[#aca899]" />
    </span>
  );
  return (
    <aside className="w-7 shrink-0 pr-px pl-0.5">
      <div className={`${box} pb-1.5`}>
        {grip}
        {sideGroups.map((g, i) => (
          <React.Fragment key={g[0]}>
            {i > 0 && <span className="my-0.5 h-0.5 w-5 border-t border-b border-t-[#b5b19c] border-b-white" />}
            {g.map((n) => <Tool key={n} name={n} cls="h-[22px] w-6" />)}
          </React.Fragment>
        ))}
      </div>
      <div className={`${box} pt-px pb-1.5`}>
        {grip}
        {orderTools.map((n) => <Tool key={n} name={n} cls="h-[22px] w-6" />)}
      </div>
    </aside>
  );
}

const navPaths = ['M3 2v8M9 2L5 6l4 4z', 'M8 2L4 6l4 4z', 'M4 2l4 4-4 4z', 'M9 2v8M3 2l4 4-4 4z'];

function LayoutTabs() {
  return (
    <nav className="flex h-4 items-stretch overflow-hidden bg-[#ece9d8]">
      {navPaths.map((d) => (
        <button key={d} type="button" aria-label="布局导航" className="flex w-[13px] items-center justify-center border-r border-b border-[#aca899]">
          <svg viewBox="0 0 12 12" className="size-3" fill="#aca899" stroke="#aca899"><path d={d} /></svg>
        </button>
      ))}
      <button type="button" className="ml-px w-[46px] bg-black text-white [clip-path:polygon(0_0,100%_0,88%_100%,12%_100%)]">模型</button>
      {['布局1', '布局2'].map((t) => (
        <button key={t} type="button" className="flex items-center">
          <span className="w-[38px] text-center">{t}</span>
          <svg viewBox="0 0 8 16" className="h-4 w-2" stroke="#222" fill="none"><path d="M7.500 0L1 15" /></svg>
        </button>
      ))}
    </nav>
  );
}

function ScrollBtn({ d, cls }: { d: string; cls: string }) {
  return (
    <button type="button" aria-label="滚动" className={`flex items-center justify-center rounded-xs border border-[#aabff0] bg-[#c6d6fc] ${cls}`}>
      <svg viewBox="0 0 8 8" className="size-2" fill="none" stroke="#3f5a8c" strokeWidth="2"><path d={d} /></svg>
    </button>
  );
}

function CommandLine() {
  return (
    <section className="mt-[5px] h-[57px] shrink-0 border-t-2 border-t-[#2b2a26]">
      <div className="mt-2.5 mr-2 border-t border-black">
        <div className="flex h-[25px] overflow-hidden border-b border-[#9a988c] bg-white">
          <p className="-ml-[9px] flex-1 text-[16px] leading-4 whitespace-nowrap">或 Enter 键退出，或单击右键显示快捷菜单。</p>
          <div className="flex flex-col justify-between py-px">
            <ScrollBtn d="M2 5l2-2 2 2" cls="h-[11px] w-3.5" />
            <ScrollBtn d="M2 3l2 2 2-2" cls="h-[11px] w-3.5" />
          </div>
        </div>
        <div className="flex h-4 items-center">
          <input aria-label="命令" className="h-full min-w-0 flex-1 bg-white outline-none" />
          <div className="flex h-full items-center bg-white pr-[18px]">
            <ScrollBtn d="M5.500 1l-3 3 3 3" cls="h-[13px] w-4" />
            <span className="mr-4 ml-px flex h-[13px] w-4 items-center justify-center gap-px rounded-xs border border-[#aabff0] bg-[#c6d6fc]">
              <span className="h-1.5 w-px bg-[#7d98d6]" />
              <span className="h-1.5 w-px bg-[#7d98d6]" />
              <span className="h-1.5 w-px bg-[#7d98d6]" />
            </span>
            <ScrollBtn d="M2.500 1l3 3-3 3" cls="h-[13px] w-4" />
          </div>
        </div>
      </div>
    </section>
  );
}

const modes: [string, boolean][] = [['捕捉', false], ['栅格', false], ['正交', false], ['极轴', false], ['对象捕捉', true], ['对象追踪', false], ['DUCS', false], ['DYN', false], ['线宽', false], ['模型', true]];

function StatusBar() {
  return (
    <footer className="flex h-6 shrink-0 items-center border-t-2 border-[#9d9a8c] bg-[#ece9d8]">
      <div className="mr-1 flex h-[18px] w-[191px] items-center border border-l-0 border-[#b3b09f] pl-[7px] text-[#a7a595]">3173245.7707, 0.0000</div>
      <div className="flex gap-1">
        {modes.map(([m, on]) => (
          <button
            key={m}
            type="button"
            aria-pressed={on}
            className={`h-[19px] border px-px ${on ? 'border-black border-r-white border-b-white bg-[#f3f1e6]' : 'border-white border-r-[#aca899] border-b-[#aca899]'}`}
          >
            {m}
          </button>
        ))}
      </div>
      <div className="ml-auto flex items-center">
        <button type="button" className="mr-1.5 flex items-center gap-1"><span className="mr-1">注释比例:</span><span>1:1</span><span className="h-0 w-0 border-x-4 border-t-4 border-x-transparent border-t-black" /></button>
        <Tool name="annoVis" cls="h-5 w-6" />
        <Tool name="annoAuto" cls="mr-1 h-5 w-6" />
        <span className="flex h-[19px] w-10 items-center border border-[#9d9a8c] border-r-white border-b-white">
          <Tool name="lock" cls="h-4 w-5" />
          <Tool name="docOk" cls="h-4 w-5" />
        </span>
        <button type="button" aria-label="状态栏菜单" className="mt-1.5 flex w-[21px] justify-center"><span className="h-0 w-0 border-x-4 border-t-4 border-x-transparent border-t-black" /></button>
        <Tool name="clean" cls="mr-0.5 h-5 w-5" />
      </div>
    </footer>
  );
}

const tasks: [string, string, boolean][] = [['pccad', '清华天河PCCAD20...', false], ['acad', 'AutoCAD 2008 - ...', true], ['pdf', '铸造工程师手册....', false], ['iedoc', '【進修級練習題...', false]];

function TaskBar() {
  return (
    <footer className="flex h-[29px] shrink-0 items-center bg-linear-to-b from-[#3c83f0] via-[#245edb] to-[#1c48b4] text-white">
      <button type="button" aria-label="开始" className="h-full w-[13px] rounded-r-lg bg-linear-to-b from-[#5fb05a] to-[#2b7d2c]" />
      <Tool name="messenger" cls="ml-[9px] h-6 w-6" />
      <Tool name="ie" cls="mr-[17px] h-6 w-[23px]" />
      <div className="flex min-w-0 gap-0.5">
        {tasks.map(([icon, title, on]) => (
          <button
            key={title}
            type="button"
            className={`flex h-6 w-[152px] min-w-0 items-center gap-1 rounded-xs pl-2 whitespace-nowrap ${on ? 'bg-[#1c4aa8] shadow-[inset_1px_1px_1px_#12337c]' : 'bg-linear-to-b from-[#5a9bfa] via-[#3a7cf2] to-[#2f6fe6]'}`}
          >
            <Glyph name={icon} />
            <span>{title}</span>
          </button>
        ))}
      </div>
      <div className="ml-auto flex items-center">
        <Tool name="mspy" cls="h-6 w-5" />
        <button type="button" className="h-6 w-5 text-[15px]">中</button>
        <Tool name="moon" cls="h-6 w-5" />
        <Tool name="punct" cls="h-6 w-5" />
        <Tool name="softkey" cls="h-6 w-5" />
        <Tool name="imeHelp" cls="h-6 w-6" />
        <Tool name="restore" cls="h-6 w-6" />
      </div>
      <div className="flex h-full w-[85px] items-center bg-linear-to-b from-[#2ab4f5] via-[#1292e8] to-[#0e7ccd]">
        <Tool name="collapse" cls="h-6 w-[18px]" />
        <Tool name="shield" cls="mr-1.5 h-6 w-[18px]" />
        <span>10:48</span>
      </div>
    </footer>
  );
}

export default function App() {
  return (
    <div className="flex min-h-screen flex-col bg-white pr-[83px] pb-12 font-['Noto_Sans_Mono_CJK_SC','Noto_Sans_CJK_SC','Liberation_Sans',sans-serif] text-[12px] leading-[14px] text-black">
      <div className="flex flex-1 flex-col bg-[#ece9d8]">
        <Toolbars />
        <div className="flex flex-1">
          <main className="flex min-w-0 flex-1 flex-col">
            <div className="min-h-0 flex-1 bg-black">
              <Drawing />
            </div>
            <LayoutTabs />
          </main>
          <SideBar />
        </div>
        <CommandLine />
        <StatusBar />
        <TaskBar />
      </div>
    </div>
  );
}
